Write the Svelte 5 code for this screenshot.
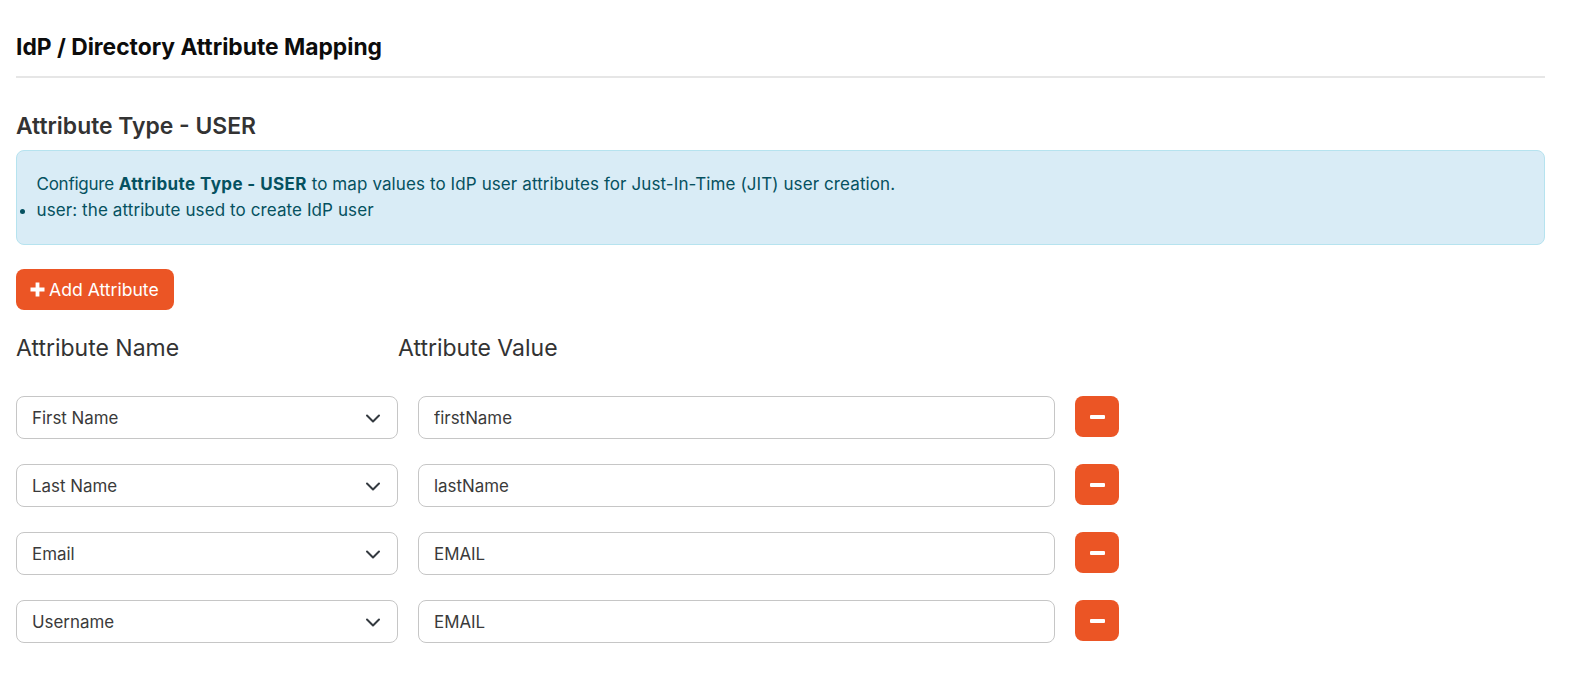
<script>
  const rows = [
    { name: 'First Name', value: 'firstName' },
    { name: 'Last Name', value: 'lastName' },
    { name: 'Email', value: 'EMAIL' },
    { name: 'Username', value: 'EMAIL' }
  ];
</script>

<main class="page">
  <h2 class="title">IdP / Directory Attribute Mapping</h2>
  <hr class="rule" />
  <h3 class="type">Attribute Type - USER</h3>
  <div class="alert">
    <div><span class="lead">Configure</span> <strong>Attribute Type - USER</strong> to map values to IdP user attributes for Just-In-Time (JIT) user creation.</div>
    <ul><li>user: the attribute used to create IdP user</li></ul>
  </div>
  <button class="add" type="button">
    <svg width="15" height="15" viewBox="0 0 15 15" aria-hidden="true"><path d="M5.6 0.5h3.8v5.1h5.1v3.8H9.4v5.1H5.6V9.4H0.5V5.6h5.1z" fill="#fff" /></svg>
    Add Attribute
  </button>
  <div class="heads">
    <span class="h-name">Attribute Name</span>
    <span>Attribute Value</span>
  </div>
  <div class="rows">
    {#each rows as row}
      <div class="row">
        <div class="select">
          <span>{row.name}</span>
          <svg width="16" height="16" viewBox="0 0 16 16" aria-hidden="true"><path d="M2 5.5l6 6 6-6" fill="none" stroke="#343a40" stroke-width="2" stroke-linecap="round" stroke-linejoin="round" /></svg>
        </div>
        <input class="input" value={row.value} />
        <button class="minus" type="button" aria-label="Remove">
          <svg width="15" height="4" viewBox="0 0 15 4" aria-hidden="true"><rect width="15" height="4" rx="1" fill="#fff" /></svg>
        </button>
      </div>
    {/each}
  </div>
</main>

<style>
  :global(body) {
    margin: 0;
    background: #fff;
    font-family: "Inter", "Open Sans", sans-serif;
  }
  .page {
    width: 1529px;
    margin-left: 16px;
    padding-top: 32px;
    color: #333;
  }
  .title {
    margin: 0;
    font-size: 22.8px;
    line-height: 30px;
    font-weight: 700;
    color: #0c0c0c;
  }
  .rule {
    margin: 14px 0 0;
    border: 0;
    height: 2px;
    background: #e6e6e6;
  }
  .type {
    margin: 33px 0 0;
    font-size: 22.9px;
    line-height: 30px;
    font-weight: 600;
    color: #333;
  }
  .alert {
    box-sizing: border-box;
    height: 95px;
    margin-top: 9px;
    padding: 20px 20px 0 19.5px;
    background: #d9ecf6;
    border: 1px solid #b6e3ef;
    border-radius: 8px;
    color: #055160;
    font-size: 17px;
    line-height: 26px;
    letter-spacing: 0.1px;
  }
  .lead { letter-spacing: -0.25px; }
  .alert strong {
    font-weight: 700;
    letter-spacing: 0.4px;
  }
  .alert ul {
    margin: 0;
    padding: 0;
  }
  .add {
    display: flex;
    align-items: center;
    gap: 4px;
    box-sizing: border-box;
    width: 158px;
    height: 41px;
    margin-top: 24px;
    padding: 0 0 0 14px;
    border: 0;
    border-radius: 8px;
    background: #eb5525;
    color: #fff;
    font: 400 17.6px "Inter", sans-serif;
  }
  .heads {
    display: flex;
    margin-top: 23px;
    font-size: 23px;
    line-height: 30px;
    color: #333;
  }
  .h-name { width: 382px; }
  .rows {
    display: flex;
    flex-direction: column;
    gap: 25px;
    margin-top: 33px;
  }
  .row {
    display: flex;
    align-items: flex-start;
    height: 43px;
  }
  .select {
    box-sizing: border-box;
    display: flex;
    align-items: center;
    justify-content: space-between;
    width: 382px;
    height: 43px;
    padding: 0 16px 0 15px;
    background: #fff;
    border: 1px solid #c6c6c6;
    border-radius: 8px;
    font-size: 16.9px;
    color: #3a3a3a;
  }
  .input {
    box-sizing: border-box;
    width: 637px;
    height: 43px;
    margin-left: 20px;
    padding: 0 15px;
    border: 1px solid #c6c6c6;
    border-radius: 8px;
    font: 400 16.9px "Inter", sans-serif;
    color: #3a3a3a;
    outline: none;
  }
  .minus {
    display: flex;
    align-items: center;
    justify-content: center;
    box-sizing: border-box;
    width: 44px;
    height: 41px;
    margin-left: 20px;
    padding: 0;
    border: 0;
    border-radius: 8px;
    background: #eb5525;
  }
</style>
